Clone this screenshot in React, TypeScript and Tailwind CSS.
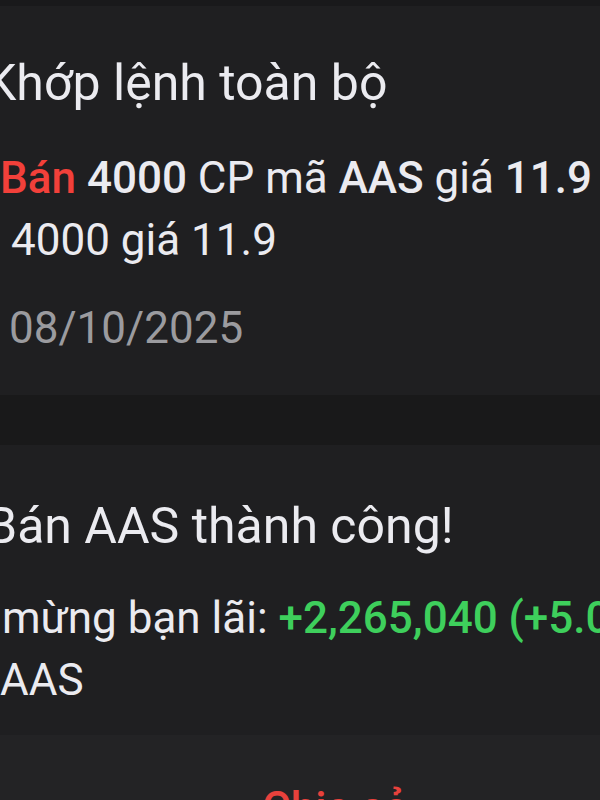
export default function App() {
  return (
    <div className="w-[600px] h-[800px] overflow-hidden bg-[#1f1f21] text-[#ebebf0] font-['Roboto','Liberation_Sans',sans-serif] flex flex-col">
      <div className="h-[6px] shrink-0 bg-[#19191b]" />
      <div className="h-[389px] shrink-0 bg-[#1f1f21] pt-[47px] whitespace-nowrap">
        <div className="text-[50px] leading-[60px] ml-[-15px]">Khớp lệnh toàn bộ</div>
        <div className="mt-[34px] text-[44px] leading-[62px]">
          <span className="font-medium text-[#f2403a]">Bán</span>{" "}
          <span className="font-medium">4000</span> CP mã{" "}
          <span className="font-medium">AAS</span> giá{" "}
          <span className="font-medium">11.9</span>
        </div>
        <div className="text-[44px] leading-[62px] pl-[11px]">4000 giá 11.9</div>
        <div className="mt-[26px] text-[44px] leading-[62px] pl-[9px] text-[#9b9b9f]">08/10/2025</div>
      </div>
      <div className="h-[50px] shrink-0 bg-[#19191a]" />
      <div className="h-[290px] shrink-0 bg-[#1f1f21] pt-[51px] whitespace-nowrap">
        <div className="text-[50px] leading-[60px] ml-[-14px]">Bán AAS thành công!</div>
        <div className="mt-[31px] text-[44px] leading-[62px] ml-[2px]">
          mừng bạn lãi:{" "}
          <span className="font-medium text-[#3ecf5c]">+2,265,040 (+5.05%)</span>
        </div>
        <div className="text-[44px] leading-[62px]">AAS</div>
      </div>
      <div className="flex-1 bg-[#232325] pt-[46px] pl-[262px] whitespace-nowrap">
        <div className="text-[44px] leading-[54px] font-medium text-[#e8413c]">Chia sẻ</div>
      </div>
    </div>
  );
}
